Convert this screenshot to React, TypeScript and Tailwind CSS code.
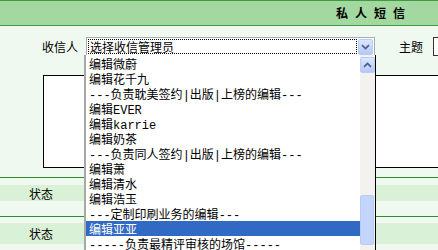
import React from "react";

const options = [
  "编辑微蔚",
  "编辑花千九",
  "---负责耽美签约|出版|上榜的编辑---",
  "编辑EVER",
  "编辑karrie",
  "编辑奶茶",
  "---负责同人签约|出版|上榜的编辑---",
  "编辑萧",
  "编辑清水",
  "编辑浩玉",
  "---定制印刷业务的编辑---",
  "编辑亚亚",
  "-----负责最精评审核的场馆-----",
];

// latin runs use a monospace face so dashes keep the old half-width look
function Mixed({ text }: { text: string }) {
  const parts = text.match(/[\x20-\x7e]+|[^\x20-\x7e]+/g) ?? [];
  return (
    <>
      {parts.map((p, i) =>
        /^[\x20-\x7e]+$/.test(p) ? (
          <span key={i} style={{ fontFamily: '"Liberation Mono", monospace' }}>
            {p}
          </span>
        ) : (
          <span key={i}>{p}</span>
        )
      )}
    </>
  );
}

function Chevron({ up }: { up?: boolean }) {
  return (
    <svg width="9" height="6" viewBox="0 0 9 6" className={up ? "rotate-180" : ""}>
      <path d="M1 1.2 L4.5 4.6 L8 1.2" fill="none" stroke="#4d6185" strokeWidth="1.8" />
    </svg>
  );
}

function ArrowButton({ up }: { up?: boolean }) {
  return (
    <div className="w-[15px] h-[16px] rounded-[2px] border border-[#b9cbf5] bg-gradient-to-b from-[#dce6fd] to-[#b5c9f7] flex items-center justify-center">
      <Chevron up={up} />
    </div>
  );
}

export default function App() {
  return (
    <div
      className="relative w-[438px] h-[250px] overflow-hidden bg-[#eff9ef] text-[12px] text-black"
      style={{ fontFamily: '"Noto Sans CJK SC", "Noto Sans", sans-serif' }}
    >
      <div className="h-[26px] border-t border-b border-[#3f9b3f] bg-[#a3d8a0] flex items-center justify-end pr-[26px]">
        <span className="font-bold text-[12px] tracking-[7px]">私人短信</span>
      </div>

      <div className="flex items-center h-[19px] mt-[11px] whitespace-nowrap">
        <div className="w-[86px] shrink-0 pl-[42px] leading-[15px]">收信人</div>
        <div className="w-[289px] shrink-0 h-[19px] flex items-center border border-[#a5acb5] bg-white">
          <div className="flex-1 h-[15px] ml-[1px] border border-dotted border-black leading-[13px] pl-[1px] text-[12px]">
            选择收信管理员
          </div>
          <div className="ml-[1px] mr-[1px]">
            <ArrowButton />
          </div>
        </div>
        <div className="ml-[24px] shrink-0 leading-[15px]">主题</div>
        <div className="ml-[10px] w-[40px] shrink-0 h-[19px] border border-[#333] bg-white" />
      </div>

      <div className="mt-[19px] ml-[43px] h-[93px] border border-black border-r-0 bg-white" />

      <div className="mt-[9px] border-t border-[#2e8b2e]">
        <div className="h-[7px]" />
        <div className="h-[16px] bg-[#d9f1d6] flex items-center">
          <div className="w-[82px] text-center leading-[15px]">状态</div>
        </div>
        <div className="h-[15px]" />
      </div>
      <div className="border-t border-[#2e8b2e]">
        <div className="h-[6px]" />
        <div className="h-[21px] bg-[#d9f1d6] flex items-center">
          <div className="w-[82px] text-center leading-[15px]">状态</div>
        </div>
      </div>

      <div className="absolute left-[84px] top-[55px] w-[292px] h-[200px] bg-white border-l-2 border-l-[#a8a8a8] border-r border-r-black flex">
        <div className="w-[275px] pt-[1px] overflow-hidden">
          {options.map((o, i) => (
            <div
              key={i}
              className={
                "h-[15px] leading-[15px] pl-[3px] whitespace-nowrap " +
                (i === 11 ? "bg-[#316ac5] text-white" : "")
              }
            >
              <Mixed text={o} />
            </div>
          ))}
        </div>
        <div className="w-[15px] bg-[#f3f2ee] flex flex-col pt-[2px]">
          <ArrowButton up />
          <div className="mt-[122px] h-[50px] w-[14px] rounded-[2px] border border-[#b9cbf5] bg-[#c4d5fb]" />
        </div>
      </div>
    </div>
  );
}
